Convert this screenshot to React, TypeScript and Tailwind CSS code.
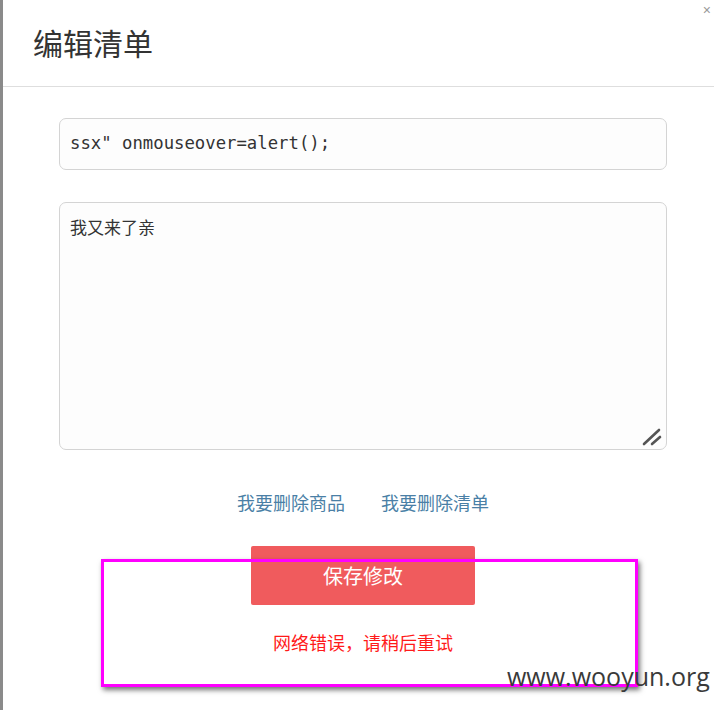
export default function App() {
  return (
    <div className="relative h-[710px] w-[714px] overflow-hidden bg-white font-['Noto_Sans_CJK_SC',sans-serif]">
      <div className="flex h-full">
        <div className="w-[3px] shrink-0 bg-[#8a8a8a]" />
        <div className="flex flex-1 flex-col">
          <div className="flex h-[87px] items-center border-b border-[#dedede] pl-[30px] pb-[3px]">
            <h1 className="text-[30px] font-normal text-[#333] leading-none">编辑清单</h1>
          </div>

          <div className="flex w-[608px] flex-col ml-[56px] mt-[31px]">
            <div className="flex h-[52px] items-center rounded-[7px] border border-[#d4d4d4] bg-[#fdfdfd] px-[10px]">
              <span className="font-['DejaVu_Sans_Mono',monospace] text-[17.3px] text-[#333]">
                ssx&quot; onmouseover=alert();
              </span>
            </div>

            <div className="relative mt-[32px] h-[248px] rounded-[7px] border border-[#d4d4d4] bg-[#fdfdfd] px-[10px] pt-[12px]">
              <span className="text-[17px] leading-none text-[#333]">我又来了亲</span>
              <svg className="absolute bottom-[3px] right-[3px]" width="22" height="18" viewBox="0 0 22 18">
                <line x1="3" y1="16" x2="18" y2="2" stroke="#555" strokeWidth="2.6" strokeLinecap="round" />
                <line x1="11" y1="16" x2="19" y2="9" stroke="#555" strokeWidth="2.6" strokeLinecap="round" />
              </svg>
            </div>

            <div className="mt-[43px] flex justify-center gap-[36px] text-[18px] leading-none text-[#4a7fa6]">
              <span>我要删除商品</span>
              <span>我要删除清单</span>
            </div>

            <div className="mt-[35px] flex justify-center">
              <button className="h-[59px] w-[224px] rounded-[2px] bg-[#f05b5d] text-[20px] text-white">
                保存修改
              </button>
            </div>

            <p className="mt-[28px] text-center text-[18px] leading-none text-[#ff1a1a]">
              网络错误，请稍后重试
            </p>
          </div>
        </div>
      </div>

      <span className="absolute right-[3px] top-[3px] font-['Liberation_Sans',sans-serif] text-[14px] leading-[14px] text-[#999]">×</span>

      <div className="absolute left-[101px] top-[559px] h-[128px] w-[537px] border-[3px] border-[#ff00ff] shadow-[2px_3px_5px_rgba(0,0,0,0.55)]" />

      <span className="absolute left-[507px] top-[664px] font-['Open_Sans',sans-serif] text-[25px] leading-none text-[#3a3a3a]">
        www.wooyun.org
      </span>
    </div>
  )
}
